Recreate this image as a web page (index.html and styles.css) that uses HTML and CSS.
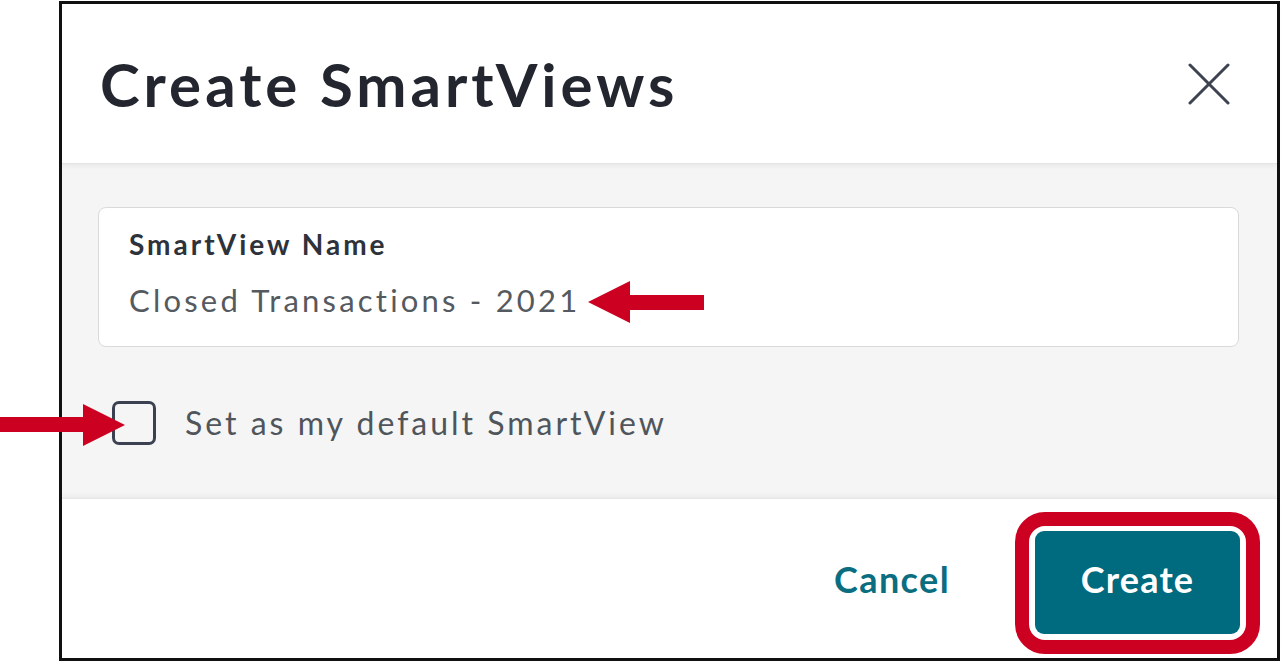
FILE: index.html
```html
<!DOCTYPE html>
<html lang="en">
<head>
<meta charset="utf-8">
<title>Create SmartViews</title>
<link rel="stylesheet" href="styles.css">
</head>
<body>
<div class="page">
  <div class="dialog">
    <header class="dialog-header">
      <h1 class="dialog-title">Create SmartViews</h1>
      <button class="close-btn" aria-label="Close">
        <svg width="42" height="42" viewBox="0 0 42 42"><path d="M2 2 L40 40 M40 2 L2 40" stroke="#3d4350" stroke-width="3" stroke-linecap="round" fill="none"/></svg>
      </button>
    </header>
    <section class="dialog-body">
      <div class="field">
        <div class="field-label">SmartView Name</div>
        <div class="field-value">Closed Transactions - 2021</div>
      </div>
      <label class="check-row">
        <span class="checkbox"></span>
        <span class="check-text">Set as my default SmartView</span>
      </label>
    </section>
    <footer class="dialog-footer">
      <button class="btn-cancel">Cancel</button>
      <div class="highlight">
        <button class="btn-create">Create</button>
      </div>
    </footer>
  </div>
  <svg class="annotations" width="1281" height="661" viewBox="0 0 1281 661">
    <polygon fill="#cc0020" points="588,302 630,281 630,295 704,295 704,310 630,310 630,323"/>
    <polygon fill="#cc0020" points="0,417 83,417 83,404 125,425 83,446 83,432 0,432"/>
  </svg>
</div>
</body>
</html>
```
FILE: styles.css
```css
* { box-sizing: border-box; }
html, body {
  margin: 0;
  padding: 0;
  background: #ffffff;
}
body {
  font-family: "Lato", "Liberation Sans", sans-serif;
  width: 1281px;
  height: 661px;
  overflow: hidden;
}
.page {
  position: relative;
  width: 1281px;
  height: 661px;
  padding: 1px 0 0 59px;
}
.dialog {
  width: 1221px;
  height: 660px;
  border: 3px solid #111111;
  display: flex;
  flex-direction: column;
  background: #ffffff;
}
.dialog-header {
  height: 160px;
  flex: none;
  display: flex;
  align-items: center;
  justify-content: space-between;
  padding: 0 47px 0 38px;
  background: #ffffff;
  border-bottom: 1px solid #e4e4e4;
  box-shadow: 0 2px 5px rgba(0,0,0,0.06);
  position: relative;
  z-index: 1;
}
.dialog-title {
  margin: 0;
  font-size: 60px;
  line-height: 72px;
  font-weight: 700;
  color: #23262f;
  letter-spacing: 4px;
}
.close-btn {
  width: 42px;
  height: 42px;
  padding: 0;
  border: 0;
  background: none;
  display: flex;
}
.dialog-body {
  flex: none;
  height: 334px;
  background: #f5f5f5;
  padding: 43px 38px 0 36px;
  display: flex;
  flex-direction: column;
  gap: 54px;
}
.field {
  height: 140px;
  background: #ffffff;
  border: 1.5px solid #dadada;
  border-radius: 8px;
  padding: 19px 30px 0;
  display: flex;
  flex-direction: column;
  gap: 20px;
}
.field-label {
  font-size: 28px;
  line-height: 34px;
  font-weight: 700;
  color: #2e323a;
  letter-spacing: 3px;
}
.field-value {
  font-size: 31px;
  line-height: 38px;
  color: #555a60;
  letter-spacing: 3.2px;
}
.check-row {
  display: flex;
  align-items: center;
  gap: 29px;
  padding-left: 14px;
}
.checkbox {
  width: 44px;
  height: 44px;
  flex: none;
  border: 3px solid #3b4150;
  border-radius: 7px;
}
.check-text {
  font-size: 32px;
  line-height: 38px;
  color: #50555c;
  letter-spacing: 3px;
}
.dialog-footer {
  flex: 1;
  display: flex;
  align-items: center;
  justify-content: flex-end;
  gap: 66px;
  padding: 8px 17px 0 0;
  background: #ffffff;
  border-top: 1px solid #e6e6e6;
  box-shadow: 0 -2px 5px rgba(0,0,0,0.05);
  position: relative;
}
.btn-cancel {
  border: 0;
  background: none;
  padding: 0 0 8px;
  font-family: inherit;
  font-size: 36px;
  font-weight: 700;
  color: #0b6e80;
  letter-spacing: 1.4px;
  margin-right: -1px;
}
.highlight {
  border: 14px solid #cc0020;
  border-radius: 30px;
  padding: 5px 6px 6px 6px;
  background: #ffffff;
}
.btn-create {
  display: flex;
  align-items: center;
  justify-content: center;
  width: 205px;
  height: 103px;
  border: 0;
  border-radius: 9px;
  background: #006a7e;
  color: #ffffff;
  font-family: inherit;
  font-size: 36px;
  font-weight: 700;
  letter-spacing: 1.2px;
  padding: 0 0 7px;
}
.annotations {
  position: absolute;
  left: 0;
  top: 0;
  pointer-events: none;
}
```
